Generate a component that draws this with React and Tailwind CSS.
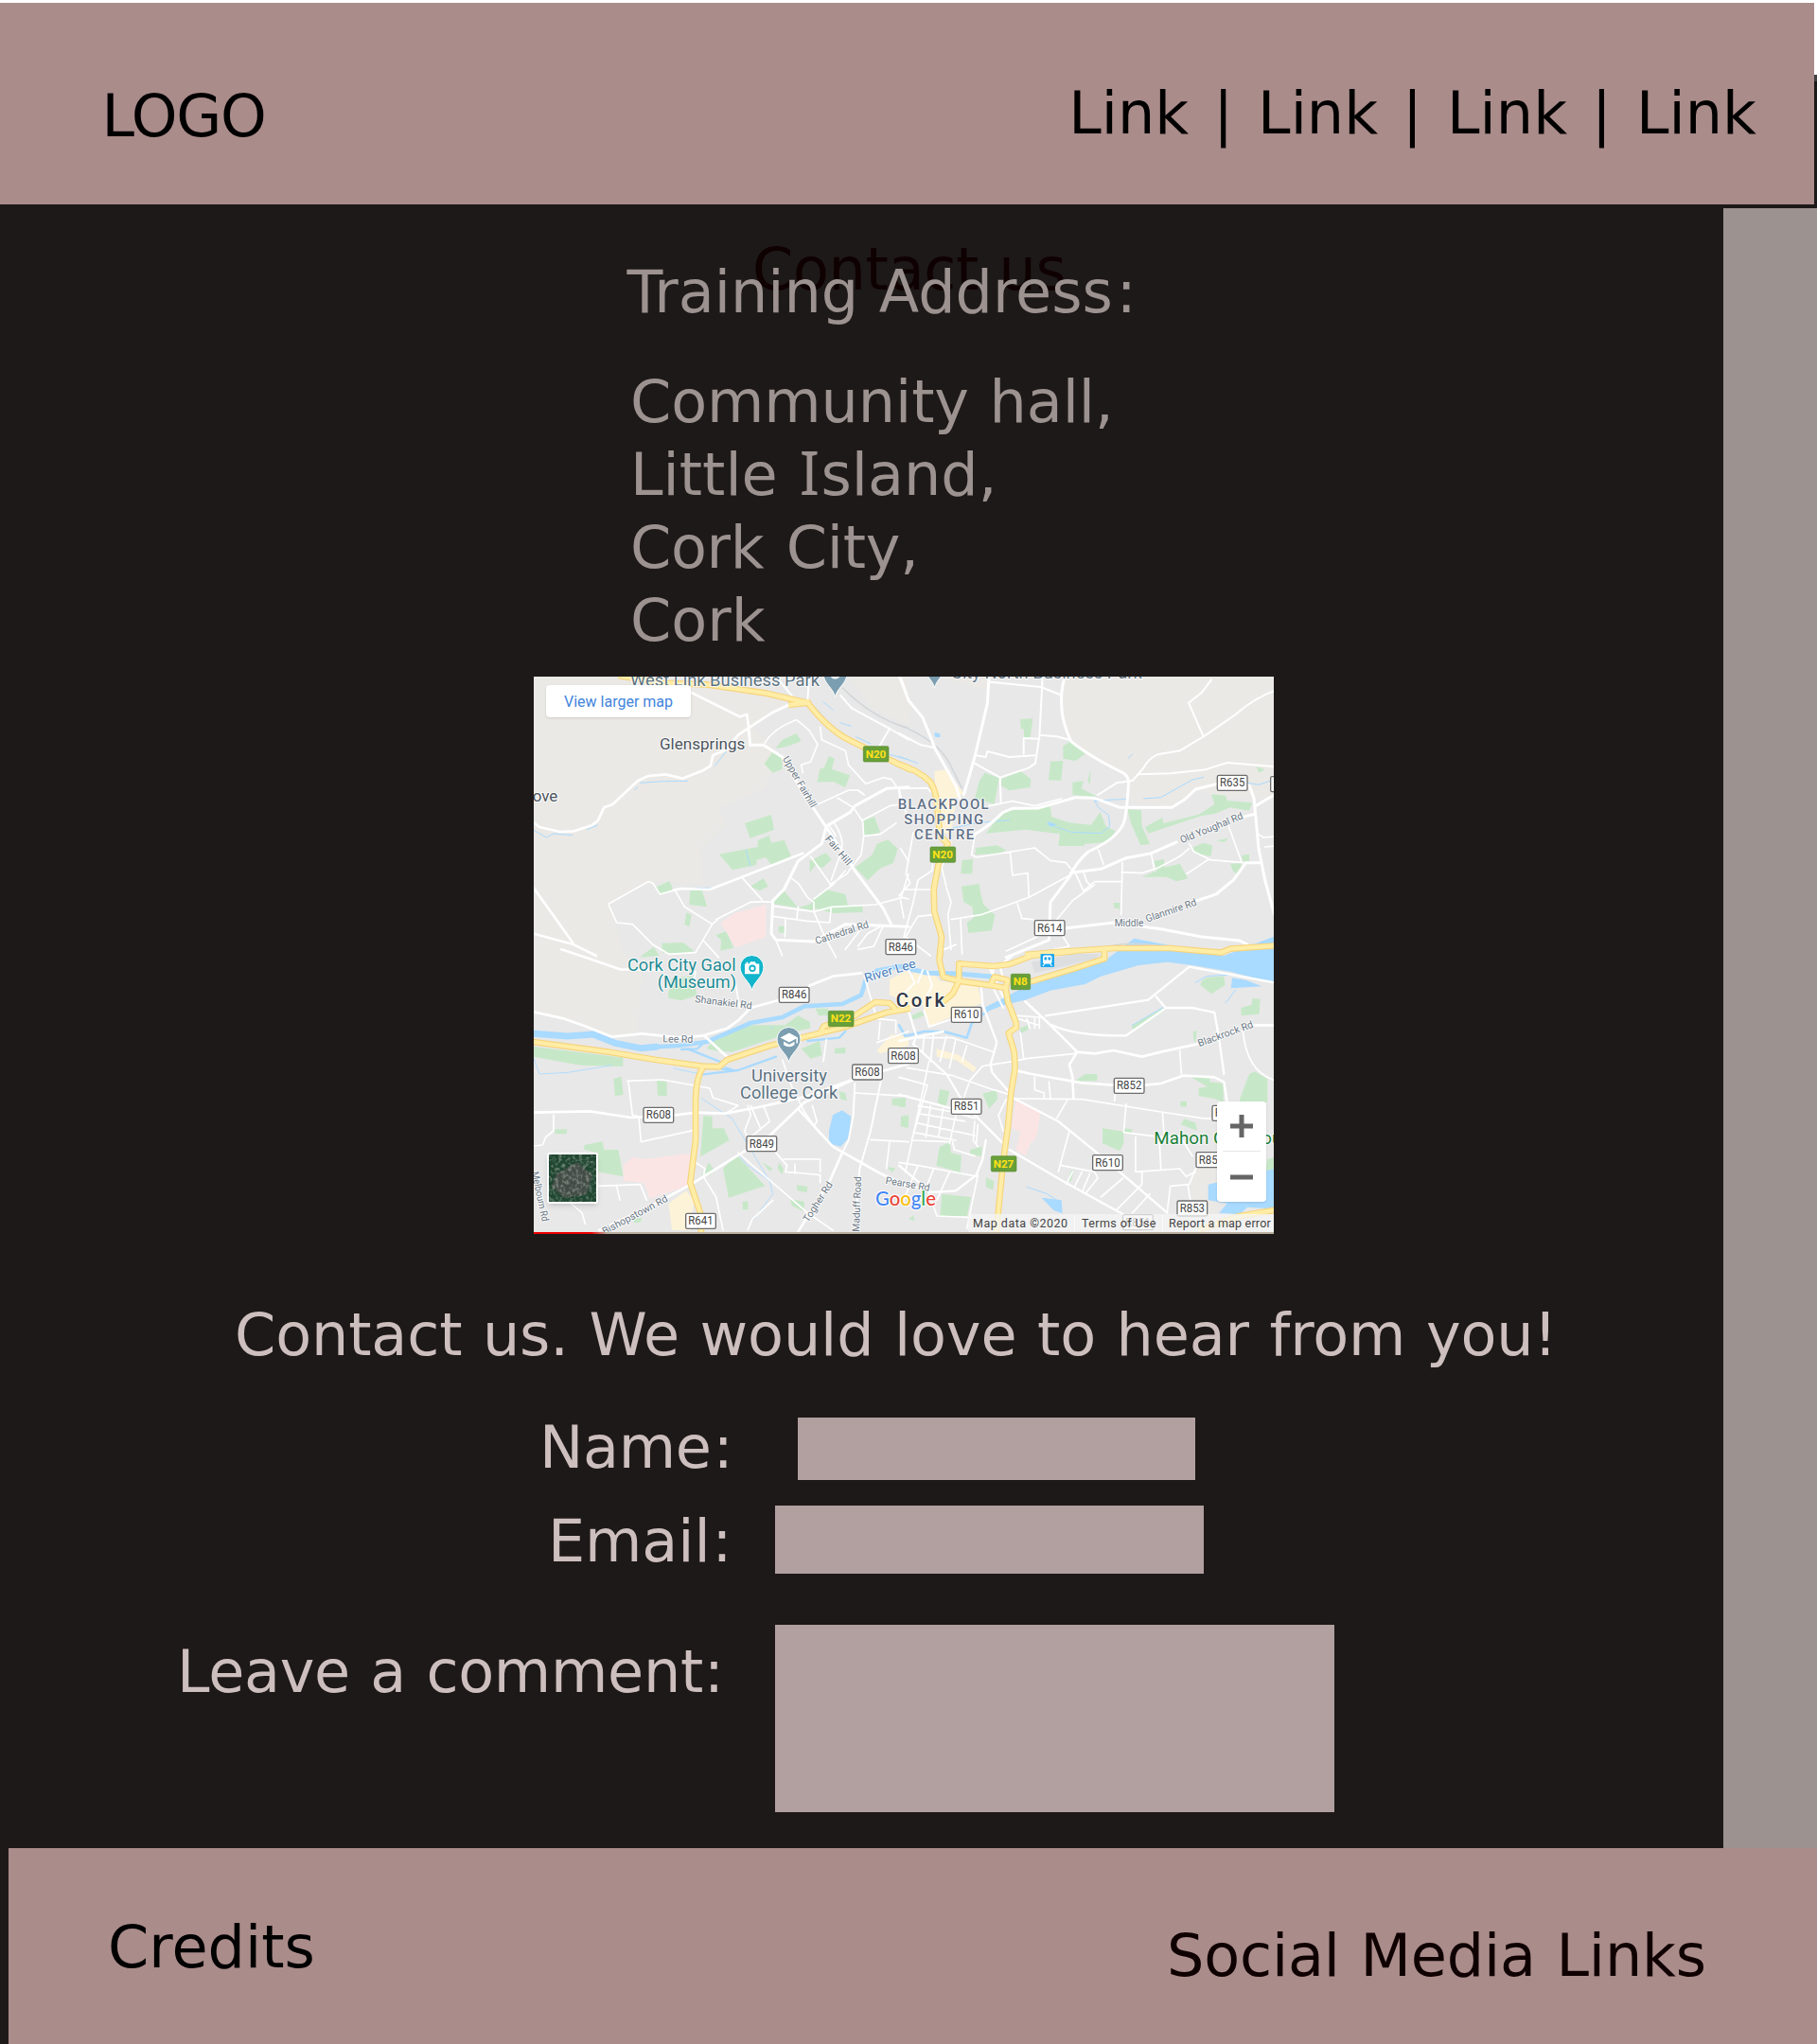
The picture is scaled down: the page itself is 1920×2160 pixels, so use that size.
import React from "react";

const QUADS = {
  1: "translate(560 710) scale(.33333)",
  2: "translate(950 710) scale(.33333)",
  3: "translate(560 1005) scale(.33333)",
  4: "translate(950 1005) scale(.33333)",
};

const RURAL = [
  [1, "M0,0 L560,40 L880,98 L800,110 L700,170 L790,260 L740,370 L600,430 L620,480 L540,560 L550,670 L380,665 L250,730 L270,800 L300,905 L0,905Z"],
  [3, "M0,0 L290,0 L355,60 L340,260 L250,270 L110,215 L0,190Z"],
  [1, "M1010,15 L1200,15 L1200,170 L1090,120Z"],
  [2, "M520,20 L1200,0 L1200,400 L1010,400 L940,370 L870,430 L735,410 L725,330 L550,225 L515,130Z"],
  [2, "M0,15 L20,80 L50,120 L0,140Z"],
  [2, "M130,15 L285,15 L280,60 L180,30Z"],
  [4, "M940,690 L1010,690 L1010,840 L930,840 L925,740Z"],
];

const GREEN = [
  [1, "M780,240 L800,215 L845,195 L860,220 L820,235 L785,243Z M742,292 L768,256 L800,270 L800,308 L770,320Z M932,306 L948,266 L966,276 L956,308 L1014,328 L1000,366 L960,348 L910,350 L920,306Z M681,480 L765,453 L774,500 L698,528Z M600,578 L722,555 L722,535 L758,518 L766,542 L806,533 L828,585 L765,612 L748,588 L718,596 L718,612 L642,628Z M1056,470 L1092,460 L1110,508 L1086,518 L1058,518Z M1030,620 L1085,580 L1100,545 L1135,532 L1166,560 L1152,606 L1112,622 L1070,661Z M886,600 L938,574 L956,595 L928,622 L905,612 L888,636Z M397,684 L442,663 L454,690 L415,706Z M508,694 L545,692 L562,745 L505,738Z M698,680 L740,655 L755,680 L728,694Z M770,735 L804,692 L850,748Z M850,748 L890,736 L902,715 L940,690 L1000,705 L1008,740 L1055,742 L1055,762 L960,765 L905,750 L898,757Z M490,800 L496,763 L512,770 L505,808Z M588,835 L622,822 L646,875 L604,884 L606,850Z M788,806 L808,806 L808,828 L788,826Z M418,860 L486,858 L520,885 L490,895 L420,890Z M360,895 L392,872 L410,900 L350,905Z"],
  [2, "M384,150 L424,148 L416,210 L396,210 L396,182 L386,180Z M520,235 L545,220 L590,260 L560,282 L520,275Z M480,284 L520,282 L514,345 L474,343Z M272,320 L318,336 L302,420 L240,400 L255,345Z M325,340 L385,314 L418,340 L416,366 L350,376 L322,360Z M550,350 L585,346 L578,370 L632,398 L550,390Z M598,345 L607,308 L606,358Z M275,512 L330,440 L480,428 L484,460 L540,478 L608,485 L638,445 L656,490 L686,505 L660,540 L590,545 L585,552 L505,552 L510,514 L400,500Z M240,580 L245,558 L310,550 L340,565 L320,575Z M724,436 L768,438 L770,490 L795,545 L766,550 L735,480Z M780,492 L835,462 L838,480 L950,452 L1000,420 L990,388 L1035,392 L1040,408 L1120,415 L1110,440 L1050,430 L1000,450 L960,456 L790,512Z M200,597 L234,594 L232,640 L196,640Z M198,680 L254,672 L258,700 L268,738 L304,770 L294,820 L220,828 L215,795 L236,780 L232,745 L205,730Z M928,558 L965,542 L994,550 L988,584 L940,576Z M808,600 L840,594 L842,620 L890,608 L916,655 L880,664 L846,650 L770,650 L818,630Z M1050,608 L1086,606 L1076,645 L1058,630Z M1086,582 L1110,578 L1110,600 L1090,600Z M680,732 L700,732 L700,752 L682,748Z M1134,300 L1160,310 L1140,320Z M1006,535 L1045,527 L1030,540Z"],
  [3, "M12,303 L295,338 L295,366 L160,362 L12,335Z M560,310 L590,270 L700,235 L808,235 L850,205 L888,225 L888,245 L840,255 L640,320 L600,318Z M860,310 L918,285 L926,330 L890,342Z M265,405 L290,398 L296,455 L270,460Z M402,410 L434,415 L434,460 L405,458Z M966,308 L1000,305 L1000,325 L965,325Z M438,135 L450,85 L515,80 L530,140 L480,157 L440,150Z M905,182 L945,182 L945,205 L915,205Z M78,565 L118,565 L115,580 L80,580Z M172,615 L230,604 L235,630 L280,630 L296,715 L215,700 L215,640 L172,630Z M550,522 L578,525 L578,562 L615,562 L632,600 L540,652Z M556,695 L566,670 L582,690 L575,708 L540,718Z M612,690 L655,645 L745,745 L630,782Z M736,670 L770,690 L760,698Z M790,670 L804,690 L800,708 L785,690Z M845,742 L880,746 L878,766 L848,760Z M825,785 L870,795 L868,825 L830,808Z M674,795 L690,792 L692,820 L675,820Z M980,445 L1000,450 L1005,475 L985,470Z M1148,468 L1192,465 L1190,495 L1148,488Z M1176,525 L1200,520 L1200,560 L1175,555Z M1130,685 L1158,688 L1150,702Z M328,848 L355,845 L350,860 L330,862Z"],
  [4, "M130,438 L160,445 L148,496 L122,480Z M265,452 L310,440 L312,470 L285,500Z M0,465 L22,470 L18,496 L0,494Z M8,525 L32,528 L25,560 L5,555Z M128,622 L160,605 L165,640 L198,648 L194,702 L118,680Z M225,630 L262,620 L262,650 L225,645Z M136,770 L228,780 L216,840 L130,840Z M275,718 L302,730 L298,758 L276,748Z M535,728 L545,695 L553,700 L545,730Z M558,412 L590,390 L628,390 L628,412Z M645,562 L712,572 L712,610 L700,634 L645,610Z M712,562 L738,565 L738,580 L712,578Z M892,476 L912,476 L912,494 L892,492Z M925,400 L985,395 L985,415 L1028,420 L1028,480 L1000,468 L950,460 L950,435 L978,430Z M1080,470 L1110,390 L1128,382 L1168,405 L1168,480 L1080,480Z M955,108 Q958,82 1000,82 L1030,80 L1034,108 L990,136Z M1084,180 L1118,170 L1120,150 L1145,152 L1142,200 L1085,205Z M736,238 L838,180 L842,190 L745,254Z M932,256 L944,252 L940,292 L934,282Z M382,245 L408,235 L410,250 L388,260Z M893,550 L905,532 L940,545 L945,570Z M1168,660 L1200,650 L1200,700 L1160,705Z M40,205 L72,190 L80,205 L45,218Z M30,850 L45,838 L50,855Z"],
];

const PINK = [
  [1, "M605,795 L650,765 L748,738 L748,840 L652,874Z"],
  [3, "M296,680 L325,654 L358,660 L506,642 L508,720 L498,745 L380,785 L362,735 L296,728Z"],
  [4, "M370,475 L448,512 L440,570 L430,600 L418,605 L402,648 L370,632 L385,575 L358,560Z"],
];

const SAND = [
  [2, "M112,315 L150,310 L205,385 L180,400 L165,520 L125,500 L118,400Z"],
  [4, "M0,80 L100,60 L130,95 L250,112 L262,165 L95,240 L75,170 L0,195Z M0,265 L30,290 L0,305Z M118,310 L190,330 L245,370 L238,385 L180,345 L120,335Z"],
  [3, "M440,800 L495,760 L520,790 L510,885 L450,885Z M1100,315 L1145,265 L1200,270 L1200,300 L1110,325Z M1140,90 L1200,60 L1200,160 L1140,140Z"],
];

const WATER_AREAS = [
  [4, "M700,-5 L745,-40 L1030,15 L1200,-50 L1200,105 L1050,65 L930,45 L850,35 L760,45 L640,80 L590,105 L480,125 L400,155 L330,172 L280,192 L270,180 L340,145 L420,102 L560,62 L650,32Z"],
  [2, "M715,900 L760,886 L860,884 L1020,900Z"],
  [3, "M990,505 L1018,525 L1012,590 L985,620 L948,610 L948,570 L960,520Z"],
  [4, "M980,740 L1190,690 L1190,818 L1105,812 L1080,835 L1015,830 L1040,800 L980,790Z M1056,85 L1100,92 L1150,112 L1052,118Z M452,782 L515,790 L518,832 L490,822Z"],
  [2, "M112,192 L130,196 L130,208 L114,206Z M470,474 L500,484 L480,492Z"],
];

const WATER_LINES = [
  [3, 21, "M12,262 L120,270 L200,264 L270,292 L350,308 L400,304"],
  [3, 14, "M380,305 L470,300 L560,288 L700,228 L800,210 L870,175 L990,168 L1050,140 L1065,90 L1100,62 L1200,45"],
  [3, 7, "M480,312 L530,310 L552,290 M500,310 L600,350 M545,392 L660,378 L780,335 M620,370 L650,380 L560,365 M880,285 L980,275 L1000,255"],
  [3, 2.5, "M12,340 L30,390 L120,385 L260,362 M545,468 L640,530 L760,730 L770,770 L710,850 M760,240 L770,246 M660,645 L690,680 L770,735 M455,372 L540,390"],
  [4, 15, "M-10,48 L30,55 L90,70 L190,72 L300,82"],
  [4, 8, "M280,190 L230,230 L215,275 L140,255 L80,255 L20,270 L0,235"],
  [4, 3, "M940,100 L975,80 L1050,75 M1035,165 L1068,122 M740,235 L838,178 M405,748 L470,770 L515,800"],
  [1, 3, "M12,502 L52,525 L75,513 L135,518 M180,500 L214,486 M350,352 L420,347 L500,346 M586,298 L622,252 M332,374 L342,364 M685,565 L698,615 M512,686 L575,685 M930,95 L960,120 M900,110 L920,130 M985,162 L1018,172 M1034,206 L1080,228 M1140,262 L1200,278"],
  [2, 3, "M0,268 L60,290 M726,274 L740,262 M620,408 L632,430 L665,455 L668,490 L640,512 L545,508 L470,482 M620,410 L680,405 L720,404 M776,402 L830,398 L930,342 L966,334 M1105,352 L1140,358 L1175,346 M150,500 L250,478 L350,470"],
];

const RAIL = [
  [1, "M990,50 Q1090,150 1200,178"],
  [2, "M0,168 Q120,215 160,290 L200,370"],
  [2, "M640,880 Q700,852 820,868"],
];

const ROADS = [
  [1, 8, "M510,65 L665,142 L688,135 L693,175 M820,105 L770,128 L693,178 L660,200 L625,245 L580,265 L572,298 L550,312 L483,338 L430,325 L375,330 L342,345 L262,420 L235,430 L215,472 L195,487 L140,505 L95,507 L30,492 L12,478"],
  [1, 9, "M693,178 L698,232 L740,232 L800,270 L870,390 L938,490 L1030,630 L1120,750 L1145,800 M938,490 L1015,445 L1030,425 L1130,370 L1200,365 M938,495 L925,545 L850,600 L805,690 L770,725 L765,830 L780,850 L900,855 L1000,800 L1200,808"],
  [1, 8, "M455,692 L480,687 L570,690 L865,575 M12,830 L140,865 L210,900 M12,685 L140,865"],
  [1, 5, "M745,225 Q770,180 845,152 L885,185 L912,230 L890,285 L860,295 L865,320 M920,175 L925,215 L1000,250 L1010,295 L1060,350 L1065,355 M912,420 L1010,375 L1040,375 L1060,390 M1065,355 L1120,335 L1145,340 L1160,360 M975,400 L1025,430 L1055,475 L1058,520 L1050,580 L1005,640 L950,675 M1055,470 L1140,425 L1175,420 M1060,520 L1110,515 L1160,480 M965,480 Q1000,530 985,575 L955,660 M950,490 L970,520 M890,585 L950,670 M830,655 L850,670 L880,715 L900,730 L900,760 L930,830 L970,905 M900,720 L960,675 L1000,630"],
  [1, 5, "M250,735 L375,665 L390,670 L412,705 L460,692 L490,745 L578,800 L525,890 L440,895 L390,865 L325,800 L275,795 L250,740 M590,785 L700,730 L735,728 L765,730 M675,655 L735,722 M578,800 L595,785 M770,742 L900,760 L960,745 L1095,738 L1180,715 L1200,720 M770,775 L880,790 L950,795 L955,745 M850,745 L846,785 M810,785 L808,840 M550,852 L598,905 M1175,560 L1200,600 M1175,720 L1200,640 M1000,880 L1060,800 L1115,805 L1070,830 L1040,870 M780,850 L800,900 M1120,805 L1090,870 L1040,880"],
  [1, 6, "M885,20 L880,90 M780,15 L830,75 M985,75 L1020,115 L1140,180 L1200,215 M1140,180 L1110,232 M1170,15 L1200,90 M1170,370 L1175,430"],
  [2, 9, "M5,20 L30,90 L75,145 L115,245 L180,360 L192,400 M285,20 L280,100 L240,270 L205,390 M525,20 Q510,60 517,130 Q525,180 545,220 Q600,265 700,315 Q726,325 728,350 Q722,450 712,480 Q690,530 600,570 Q560,605 540,650 L480,730 L478,780 L475,850 L340,905"],
  [2, 9, "M240,515 Q290,485 330,445 L360,433 L440,432 L560,398 L620,400 L700,430 L865,430 L905,405 L940,372 L1010,355 L1110,360 L1125,400 L1140,560 L1160,660 L1190,770 M545,637 L640,625 L720,590 L800,575 L880,540 M1090,460 L1130,450 M1130,425 L1190,390 M525,813 L680,795 L830,815 L960,840 L1080,852 L1105,865 M945,725 L1005,705 L1060,660 L1100,605 L1150,605"],
  [2, 6, "M455,15 L445,205 L432,290 L410,305 L320,335 L240,290 M320,335 L323,412 M445,200 L500,205 L540,215 M290,32 L450,48 L510,72 M395,210 L445,212 M395,210 L395,260 M245,265 L275,270 L280,252 L350,270 L430,265 M0,195 L70,232 L110,240 M990,25 L960,65 L918,98 L965,205 M1190,60 Q1130,80 1060,140 L965,205 L890,250 L820,262 Q790,275 775,305 L740,345 L690,352 L630,390 M760,325 L860,322 L970,310 L1040,288 L1190,300"],
  [2, 5, "M285,425 L360,410 L430,425 L515,402 M240,520 L230,580 L245,588 L430,558 L480,598 L530,605 L545,625 M352,570 L360,645 L408,638 L412,715 M165,785 L260,770 L412,715 L550,640 M375,735 L390,782 L425,785 M632,565 L648,610 M708,605 L704,770 M705,635 L770,638 L820,622 L890,585 L920,560 M800,580 L808,620 M912,640 L980,595 L1090,605 M1045,490 L1085,600 M920,545 L935,570 L985,595 M560,640 L585,695 L620,665 L704,665 M500,785 L550,725 L620,675 M585,635 L595,665 L610,680 M1140,515 L1155,525 L1190,522 M1160,555 L1190,552 M520,840 L540,870 L490,880 M340,885 L470,825"],
  [2, 5, "M0,370 L90,368 L100,380 M0,375 L30,470 M45,510 L22,640 L35,670 L0,710 M110,560 L105,630 L60,660 L45,730 L15,840 M165,540 L135,620 L150,680 M20,690 L100,690 M150,685 L165,730 L155,770 L165,880 M110,770 L60,775 L20,840 L100,900 M195,785 L200,895 M5,725 L15,780"],
  [3, 8, "M12,193 L110,215 L180,240 L260,272 L355,262 L480,275 L550,268 L625,245 L660,220 L700,180 L790,155 M552,268 L632,342 M100,-5 L190,25 L285,58 L420,60 M885,110 L960,80 L1050,70"],
  [3, 8, "M12,512 L190,508 L320,528 L460,520 L525,512 L620,515 L740,492 L880,460 L1030,405 L1200,358 M510,740 L680,635 L760,585 L870,480 L1030,405 M220,885 L380,810 L510,740 M850,500 L960,620 L1110,705 L1200,745 M990,640 L950,730 L850,890"],
  [3, 6, "M1115,400 L1080,570 L1045,690 L1030,880 M1030,420 L1025,520 L1010,600 L990,640"],
  [3, 5, "M660,640 L880,830 L960,885 M308,412 L420,408 L570,435 L580,465 L660,490 L620,515 M312,415 L325,520 L345,525 L352,605 L520,568 M75,520 L75,570 L50,590 L40,615 L12,618 M550,715 L590,780 L612,885 M215,745 L350,740 L370,790 M275,745 L285,790 M130,800 L165,830 L175,865 M690,885 L705,850 L770,790 M525,670 L555,690 L550,715 M650,95 L665,180 M1100,290 L1200,255 M800,345 L830,430 L870,510 L920,580 M940,280 L930,350 M895,490 L910,540 L900,555 L920,575 M690,490 L700,520 L680,570 L690,590"],
  [3, 5, "M1030,450 L1200,460 M1080,598 L1200,605 M1140,605 L1130,690 M780,640 L815,680 L810,700 L870,705 L920,710 L920,735 M805,660 L920,660 L920,700 M840,675 L840,705 M1060,80 L1100,215 L1160,220 L1160,260 M1110,225 L1105,280 M525,65 L515,120 M700,490 L730,560 M740,490 L760,540 L700,590"],
  [4, 8, "M400,160 L480,235 L565,320 L540,360 L550,400 L553,465 M560,320 L620,325 L680,315 L770,335 L830,320 L945,295 M1120,235 L1190,235 M375,380 L420,390 L580,418 L680,425 M780,425 L830,420 L900,395 L1000,400 L1030,415 L1040,480"],
  [4, 7, "M350,460 L505,540 L640,650 L740,735 L850,830 M350,630 L520,730 L720,840 M465,205 L790,155 L920,50 M920,50 L1190,100 M815,145 L845,180 L930,180 L1000,195 L1015,280 L1030,390 M485,235 Q560,270 720,268 L840,185"],
  [4, 7, "M45,295 L150,390 L210,490 L340,620 M260,110 L265,170 L310,290 L290,360 L295,385 L360,460 M0,285 L140,255 M30,190 L55,270 L45,295 M0,455 L170,500 M275,600 L265,660 L245,710 L180,760 L100,765 L0,680"],
  [4, 5, "M60,275 L170,275 L300,320 M80,265 L75,320 M110,260 L100,350 M150,270 L130,350 M180,280 L160,370 M215,300 L200,350 M25,370 L170,395 L300,440 L350,455 M0,400 L90,425 L40,600 M95,350 L20,700 M60,490 L170,510 L240,530 M60,515 L210,540 M55,545 L240,585 M45,575 L180,600 M40,600 L160,605 M100,490 L85,590 M140,500 L125,590 M180,520 L160,610 M240,540 L235,600 L250,620 M170,605 L175,630 L240,650 M205,465 L225,410 L265,365 L360,350 L410,340 L560,325 M340,470 L315,520 L330,570 M0,670 L60,680 L250,715 M60,680 L10,800 M110,690 L70,790 M160,700 L120,790 M250,710 L215,880 M0,740 L90,755 L120,840 L230,845 M250,550 L245,610"],
  [4, 5, "M370,468 L580,470 L830,510 L960,530 L1000,532 M535,470 L500,530 M720,485 L712,575 L830,590 L890,585 L930,650 M750,590 L750,700 L890,690 L910,715 L940,700 M835,510 L840,580 M825,590 L830,690 M890,315 L895,390 M540,570 L505,700 M515,680 L620,700 L630,720 L590,770 M550,700 L530,740 M580,700 L555,750 M605,705 L580,765 M710,720 L640,780 M770,700 L770,740 L690,820 M795,770 L740,830 M430,400 L430,440 L460,450 L460,465 M475,415 L480,465 M1090,250 Q1100,380 1190,410 M685,455 L683,475 M915,740 L925,800 M940,690 L920,740 L860,745 L850,830 M375,205 L450,210 M380,215 L440,235 M405,215 L415,245 M430,210 L430,245 M445,210 L445,245 M385,260 L395,340"],
  [4, 6, "M330,145 L290,60 M300,45 L295,110 L330,180 M360,15 L320,45 L330,90 M80,190 L95,240 L170,215 M130,0 L180,-20 M30,60 L50,100 L20,130 M90,65 L105,110 L85,150 M60,100 L75,60"],
];

const HIGHWAYS = [
  [1, "M280,12 L420,35 L560,40 L750,68 L880,98 Q940,175 1000,210 L1080,250 L1210,312"],
  [1, "M820,105 L880,98 L880,88"],
  [2, "M-10,290 Q60,310 100,350 Q118,380 120,420 L130,520 L155,545 L125,610 L110,690 L112,760 L135,840 L128,910"],
  [4, "M131,-10 L128,30 L140,82 L190,95 L300,110 L338,118 L345,160 L370,225 L372,242 L347,260 L365,320 L368,370 L355,450 L345,560 L335,630 L325,720 L308,895"],
  [3, "M8,288 L250,320 L400,345 L545,365 L600,367 L625,345 L760,300 L860,275 L1000,240 L1130,195 L1205,182"],
  [3, "M918,265 L932,238 L1030,205 L1095,162 L1140,165 L1160,185"],
  [3, "M550,368 Q528,395 525,470 L525,600 L508,735 L540,830 L543,895"],
  [4, "M140,160 L170,135 L190,95 L190,40 L300,48 L350,42 L420,15 L560,0"],
  [4, "M290,108 L302,82 L345,92 L338,118"],
  [4, "M415,98 L560,54 L652,24 L650,-8"],
  [2, "M400,897 L500,888 L680,876 L860,876 L1020,890 L1050,878 L1195,868"],
  [4, "M1200,820 L1080,840 L950,885"],
];

const BADGES = [
  [2, 1009, 328, "R635"], [2, 430, 788, "R614"], [2, 1178, 332, ""],
  [3, 790, 115, "R846"], [1, 1128, 848, "R846"], [4, 166, 178, "R610"],
  [3, 1022, 360, "R608"], [3, 1136, 308, "R608"], [4, 682, 403, "R852"],
  [4, 166, 469, "R851"], [3, 360, 496, "R608"], [3, 687, 587, "R849"],
  [4, 614, 647, "R610"], [3, 494, 832, "R641"], [4, 882, 792, "R853"],
  [4, 942, 638, "R852"], [4, 993, 490, "R852"], [4, 710, 836, "R851"],
];

const NATIONAL = [
  [1, 1057, 236, "N20"], [2, 99, 555, "N20"], [3, 946, 190, "N22"],
  [4, 355, 73, "N8"], [4, 292, 650, "N27"],
];

/* quad, x, baseline, text, size, length, colour, weight, rotation */
const LABELS = [
  [1, 318, 46, "West Link Business Park", 53, 600, "#5b7282", 400, 0],
  [2, 165, 22, "City North Business Park", 53, 605, "#5b7282", 400, 0],
  [1, 411, 247, "Glensprings", 52, 271, "#4d5560", 400, 0],
  [1, 8, 410, "ove", 50, 80, "#4d5560", 400, 0],
  [2, -4, 436, "BLACKPOOL", 45, 288, "#5f7088", 500, 0],
  [2, 16, 483, "SHOPPING", 45, 252, "#5f7088", 500, 0],
  [2, 48, 530, "CENTRE", 45, 190, "#5f7088", 500, 0],
  [1, 800, 275, "Upper Fairhill", 32, 182, "#6b7885", 400, 60],
  [1, 934, 530, "Fair Hill", 32, 112, "#6b7885", 400, 50],
  [1, 908, 864, "Cathedral Rd", 32, 176, "#6b7885", 400, -18],
  [2, 896, 544, "Old Youghal Rd", 32, 212, "#6b7885", 400, -22],
  [2, 683, 806, "Middle", 32, 92, "#6b7885", 400, 0],
  [2, 786, 794, "Glanmire Rd", 32, 168, "#6b7885", 400, -19],
  [3, 309, 62, "Cork City Gaol", 53, 344, "#218b93", 400, 0],
  [3, 404, 117, "(Museum)", 53, 250, "#218b93", 400, 0],
  [3, 522, 162, "Shanakiel Rd", 32, 182, "#6b7885", 400, 7],
  [3, 421, 289, "Lee Rd", 32, 96, "#6b7885", 400, 1],
  [3, 1065, 100, "River Lee", 40, 168, "#4a80bd", 400, -17],
  [4, -10, 177, "Cork", 61, 154, "#303847", 500, 0],
  [3, 702, 413, "University", 54, 240, "#5b7282", 400, 0],
  [3, 666, 467, "College Cork", 54, 310, "#5b7282", 400, 0],
  [4, 952, 304, "Blackrock Rd", 32, 184, "#6b7885", 400, -20],
  [4, 808, 612, "Mahon Golf Cou", 53, 405, "#188038", 400, 0],
  [3, 236, 900, "Bishopstown Rd", 32, 230, "#6b7885", 400, -28],
  [3, 5, 702, "Melbourn Rd", 32, 160, "#6b7885", 400, 78],
  [3, 882, 862, "Togher Rd", 32, 145, "#6b7885", 400, -57],
  [3, 1044, 890, "Maduff Road", 32, 175, "#6b7885", 400, -88],
  [3, 1126, 737, "Pearse Rd", 32, 142, "#6b7885", 400, 10],
];

function Shapes({ items, fill }) {
  return items.map(([q, d], i) => <path key={i} transform={QUADS[q]} d={d} fill={fill} />);
}

function Lines({ items, stroke }) {
  return items.map(([q, w, d], i) => (
    <path key={i} transform={QUADS[q]} d={d} fill="none" stroke={stroke} strokeWidth={w} strokeLinejoin="round" strokeLinecap="round" />
  ));
}

function Pin({ x, y, fill }) {
  return (
    <path
      transform={`translate(${x} ${y})`}
      d="M0,36.5 C-2,27 -12.5,22 -12.5,12 A12.5,12.5 0 0 1 12.5,12 C12.5,22 2,27 0,36.5Z"
      fill={fill}
      stroke="#fff"
      strokeWidth="1"
    />
  );
}

function CityMap() {
  return (
    <svg className="block h-[587px] w-[782px]" viewBox="564 715 782 587" fontFamily="Roboto, sans-serif">
      <rect x="564" y="715" width="782" height="587" fill="#e8e8e8" />
      <Shapes items={RURAL} fill="#ebe9e5" />
      <Shapes items={GREEN} fill="#c7e8c8" />
      <Shapes items={PINK} fill="#fbe5e4" />
      <Shapes items={SAND} fill="#fdf3d8" />
      <path transform={QUADS[4]} d="M420,35 L560,8 L640,10 L620,25 L430,70Z" fill="#dcdee0" />
      <Shapes items={WATER_AREAS} fill="#a9daff" />
      <Lines items={WATER_LINES} stroke="#a9daff" />
      {RAIL.map(([q, d], i) => (
        <path key={i} transform={QUADS[q]} d={d} fill="none" stroke="#d3d7da" strokeWidth="5" />
      ))}
      <Lines items={ROADS} stroke="#fff" />
      {HIGHWAYS.map(([q, d], i) => (
        <path key={i} transform={QUADS[q]} d={d} fill="none" stroke="#f6d47c" strokeWidth="20" strokeLinejoin="round" />
      ))}
      {HIGHWAYS.map(([q, d], i) => (
        <path key={i} transform={QUADS[q]} d={d} fill="none" stroke="#ffeda6" strokeWidth="13" strokeLinejoin="round" />
      ))}
      {BADGES.map(([q, x, y, t], i) => (
        <g key={i} transform={QUADS[q]}>
          <rect x={x} y={y} width="95" height="48" rx="5" fill="#fff" stroke="#6d6d6d" strokeWidth="4" />
          {t && (
            <text x={x + 8} y={y + 36} fontSize="37" fill="#454545" textLength="79" lengthAdjust="spacingAndGlyphs">{t}</text>
          )}
        </g>
      ))}
      {LABELS.map(([q, x, y, t, size, len, fill, weight, rot], i) => (
        <g key={i} transform={QUADS[q]}>
          <text
            transform={`translate(${x} ${y}) rotate(${rot})`}
            fontSize={size}
            fontWeight={weight}
            fill={fill}
            stroke="#fff"
            strokeOpacity=".8"
            strokeWidth="6"
            strokeLinejoin="round"
            paintOrder="stroke"
            textLength={len}
            lengthAdjust={weight === 500 ? "spacing" : "spacingAndGlyphs"}
          >
            {t}
          </text>
        </g>
      ))}
      {NATIONAL.map(([q, x, y, t], i) => (
        <g key={i} transform={QUADS[q]}>
          <rect x={x} y={y} width={t === "N8" ? 61 : 80} height="49" rx="4" fill="#689f38" stroke="#558b2f" strokeWidth="2" />
          <text x={x + 7} y={y + 36} fontSize="35" fontWeight="700" fill="#ffe11a" textLength={t === "N8" ? 45 : 65} lengthAdjust="spacingAndGlyphs">{t}</text>
        </g>
      ))}
      <Pin x={882.5} y={700} fill="#7b9eb0" />
      <circle cx="882.5" cy="712" r="5.5" fill="#fff" />
      <Pin x={987.5} y={690.5} fill="#7b9eb0" />
      <Pin x={794.5} y={1010} fill="#12b5cb" />
      <path d="M787,1018.5h1.5v-1.8h2v1.8h1.2l1.4-2.2h4.6l1.4,2.2h3.2v10.8h-15.3z" fill="#fff" />
      <circle cx="795" cy="1023.3" r="2.8" fill="#fff" stroke="#12b5cb" strokeWidth="1.8" />
      <Pin x={833.5} y={1086} fill="#7b9eb0" />
      <path d="M824.5,1096.5l9.5-5 9,5v6h-1.6v-5l-7.4,4z M828,1100.5l6,3.2 5.5-3v3.5q-5.5,4-11.5,0z" fill="#fff" />
      <rect x="1099.5" y="1008" width="14.5" height="14" rx="1" fill="#1ca8ee" />
      <rect x="1102" y="1009.5" width="9.5" height="9" rx="2" fill="#fff" />
      <path d="M1103.5,1011.5h2.6v3h-2.6z M1107.5,1011.5h2.6v3h-2.6z" fill="#1ca8ee" />
      <path d="M1104,1018l-2,3 M1109.5,1018l2,3" stroke="#fff" strokeWidth="1.2" />
      <text x="925" y="1274" fontSize="21" fontWeight="500" textLength="64" lengthAdjust="spacingAndGlyphs" stroke="#fff" strokeWidth="2" paintOrder="stroke" fontFamily="Lato, sans-serif">
        <tspan fill="#4285f4">G</tspan>
        <tspan fill="#ea4335">o</tspan>
        <tspan fill="#fbbc05">o</tspan>
        <tspan fill="#4285f4">g</tspan>
        <tspan fill="#34a853">l</tspan>
        <tspan fill="#ea4335">e</tspan>
      </text>
    </svg>
  );
}

function SatelliteThumb() {
  return (
    <svg className="block h-[50px] w-[50px]" viewBox="0 0 50 50">
      <defs>
        <filter id="terrain" x="0" y="0" width="100%" height="100%">
          <feTurbulence type="fractalNoise" baseFrequency=".28" numOctaves="3" seed="4" />
          <feColorMatrix values="0 0 0 0 .58  0 0 0 0 .58  0 0 0 0 .56  2.6 0 0 0 -1.15" />
        </filter>
      </defs>
      <rect width="50" height="50" fill="#1f4630" />
      <path d="M8,20 L30,8 L46,22 L40,42 L16,46 L3,34Z" fill="#4b4f4c" opacity=".8" />
      <rect width="50" height="50" filter="url(#terrain)" opacity=".5" />
    </svg>
  );
}

function TrainingMap() {
  return (
    <div className="relative ml-[564px] mt-[21px] h-[589px] w-[782px] overflow-hidden font-['Roboto',sans-serif] [word-spacing:0px]">
      <CityMap />
      <div className="h-[2px] bg-[linear-gradient(90deg,#e00_0,#e00_60px,#b9b09e_78px)]" />
      <div className="absolute left-[13px] top-[9px] flex h-[34px] w-[153px] items-center justify-center rounded-sm bg-white text-[16px] text-[#4285dc] shadow">
        View larger map
      </div>
      <div className="absolute left-[14px] top-[503px] rounded-[3px] border-2 border-white shadow-md">
        <SatelliteThumb />
      </div>
      <div className="absolute bottom-[2px] right-0 flex h-[19px] items-center bg-[#f5f5f5]/75 text-[12.5px] leading-[18px] text-[#444]">
        <span className="w-[112px] pl-[5px] tracking-[0.5px]">Map data ©2020</span>
        <span className="w-[93px] border-l border-white/60 pl-[7px] tracking-[0.4px]">Terms of Use</span>
        <span className="w-[118px] border-l border-white/60 pl-[6px] tracking-[0.2px]">Report a map error</span>
      </div>
      <div className="absolute left-[722px] top-[449px] flex h-[106px] w-[52px] flex-col items-center rounded-sm bg-white shadow">
        <svg className="mt-[14px] h-6 w-6" viewBox="0 0 24 24">
          <path d="M0,12h24M12,0v24" stroke="#666" strokeWidth="5" />
        </svg>
        <div className="mt-[14px] h-px w-10 bg-[#e6e6e6]" />
        <svg className="mt-[15px] h-6 w-6" viewBox="0 0 24 24">
          <path d="M0,12h24" stroke="#666" strokeWidth="5" />
        </svg>
      </div>
    </div>
  );
}

function Header() {
  return (
    <header className="flex h-[220px] bg-[#1d1918]">
      <div className="h-[216px] w-[1917px] border-t-[3px] border-white bg-[#aa8c8b]">
        <div className="flex justify-between pl-[107.5px] pr-[61px]">
          <span className="mt-[81px] tracking-[-1.2px] text-black">LOGO</span>
          <nav className="mt-[78px] flex whitespace-pre text-black">
            <a>Link</a>
            <span className="w-[73px] text-center">|</span>
            <a>Link</a>
            <span className="w-[73px] text-center">|</span>
            <a>Link</a>
            <span className="w-[73px] text-center">|</span>
            <a>Link</a>
          </nav>
        </div>
      </div>
      <div className="h-[86px] w-[3px] border-b-[7px] border-[#3d4040] bg-white" />
    </header>
  );
}

function Address() {
  return (
    <section className="relative h-[474px] text-[#9c9290]">
      <h1 className="absolute left-[795px] top-[26px] tracking-[-0.3px] text-[#0f0001]">Contact us</h1>
      <h2 className="relative ml-[662.5px] pt-[50px]">
        Training Address<span className="ml-[4px]">:</span>
      </h2>
      <address className="relative ml-[666px] mt-[39px] not-italic">
        <p className="tracking-[-0.1px]">Community hall,</p>
        <p>
          Little{" "}
          <span className="inline-block w-[24px] text-center font-['Noto_Sans',sans-serif] text-[63px] leading-none">I</span>
          sland,
        </p>
        <p className="tracking-[-0.3px] [word-spacing:4px]">Cork City,</p>
        <p>Cork</p>
      </address>
    </section>
  );
}

function ContactForm() {
  return (
    <form className="h-[649px] pt-[68px] text-[#cdbfbe]">
      <h2 className="ml-[248px] tracking-[-0.13px]">Contact us. We would love to hear from you!</h2>
      <div className="mt-[42px] flex h-[99px]">
        <label className="w-[843px] shrink-0 pl-[570px] tracking-[-0.3px]">
          Name<span className="ml-[2px]">:</span>
        </label>
        <div className="mt-[7px] h-[66px] w-[420px] bg-[#b1a09f]" />
      </div>
      <div className="flex h-[126px]">
        <label className="w-[819px] shrink-0 pl-[579px] tracking-[-0.1px]">
          Email<span className="ml-[2px]">:</span>
        </label>
        <div className="mt-px h-[72px] w-[453px] bg-[#b1a09f]" />
      </div>
      <div className="flex">
        <label className="w-[819px] shrink-0 pl-[187px] pt-[12px] tracking-[-0.3px]">
          Leave a comment<span className="ml-[1px]">:</span>
        </label>
        <div className="mt-px h-[198px] w-[591px] bg-[#b1a09f]" />
      </div>
    </form>
  );
}

export default function App() {
  return (
    <div className="h-[2160px] w-[1920px] overflow-hidden bg-[#1d1918] font-['DejaVu_Sans',sans-serif] text-[62px] leading-[77px] whitespace-nowrap [word-spacing:2px]">
      <Header />
      <div className="flex h-[1733px]">
        <main className="w-[1821px]">
          <Address />
          <TrainingMap />
          <ContactForm />
        </main>
        <aside className="grow bg-[#9c9290]" />
      </div>
      <footer className="ml-[9px] flex h-[207px] justify-between bg-[#aa8c8b] pl-[105px] pr-[117px]">
        <span className="mt-[66px] text-black">Credits</span>
        <span className="mt-[75px] tracking-[-0.15px] text-[#0f0001]">Social Media Links</span>
      </footer>
    </div>
  );
}
